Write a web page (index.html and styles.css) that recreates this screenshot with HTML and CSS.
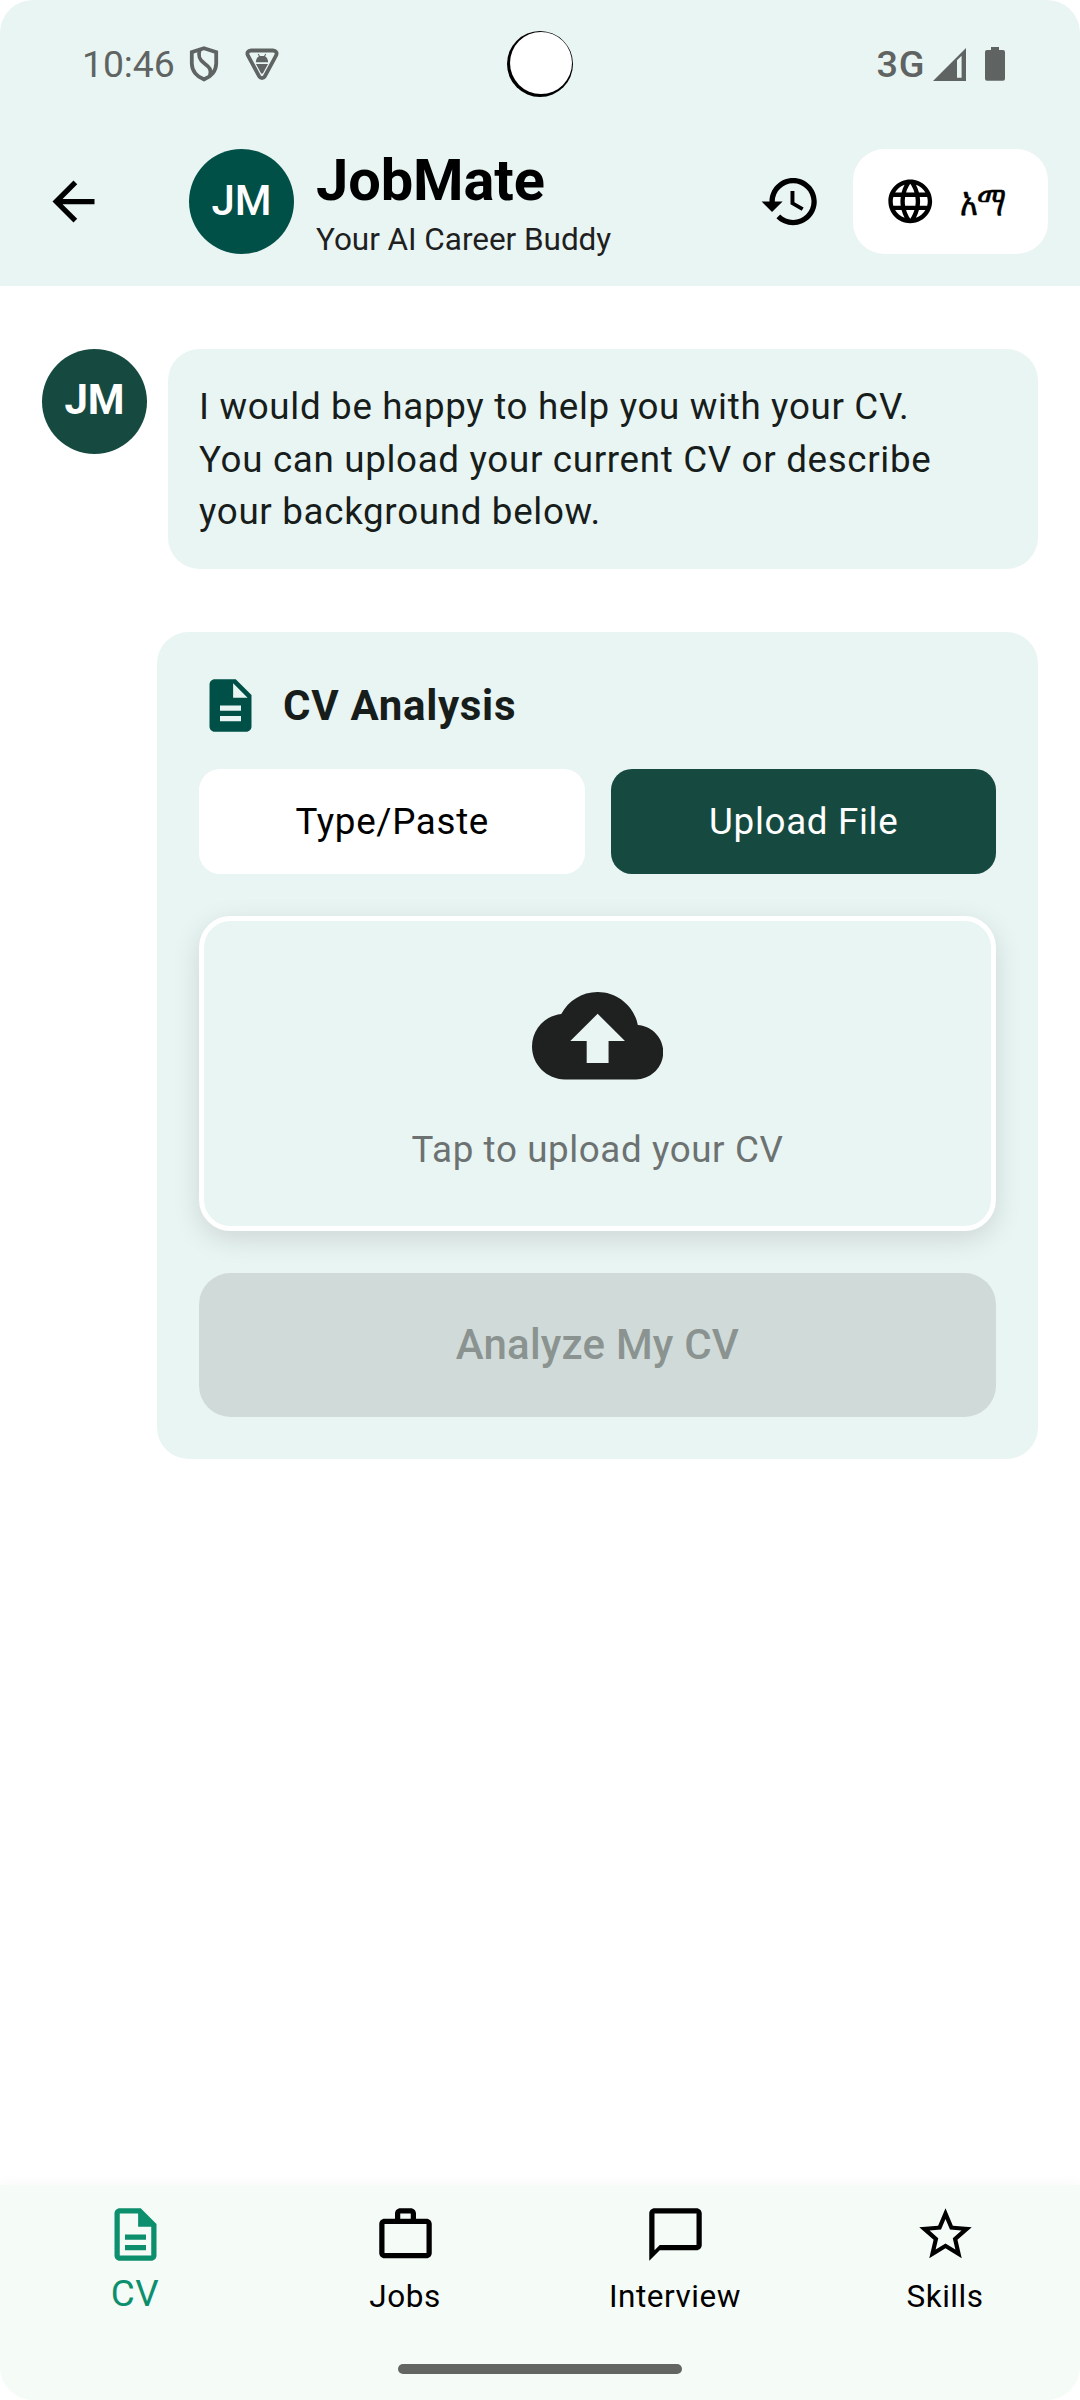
FILE: index.html
```html
<!DOCTYPE html>
<html lang="en">
<head>
<meta charset="utf-8">
<title>JobMate</title>
<link rel="stylesheet" href="styles.css">
</head>
<body>
<div class="screen">
  <header class="header">
    <div class="status">
      <span class="clock">10:46</span>
      <svg class="shield" viewBox="0 0 30 36"><path d="M15 2.200 27.200 6.200V17.500C27.200 25 22 31 15 33.400 8 31 2.800 25 2.800 17.500V6.200Z"/><path d="M10.500 4.500C9 10 10 13.500 15.500 17.500S22.500 24 21 29.500"/></svg>
      <svg class="vpn" viewBox="0 0 34 33"><path class="vpn-frame" d="M6 2.500H28C31 2.500 32.500 5 31 7.600L19.800 28.300C18.500 30.700 15.500 30.700 14.200 28.300L3 7.600C1.500 5 3 2.500 6 2.500Z"/><path class="vpn-fill" d="M10.800 14.200C11 10.800 12.500 9 14 8.300L12.700 6.300 13.600 5.800 15 7.900H19L20.400 5.800 21.300 6.300 20 8.300C21.500 9 23 10.800 23.200 14.200ZM11 16H23L17.800 25.500H16.200Z"/></svg>
      <span class="spacer"></span>
      <span class="network">3G</span>
      <svg class="signal" viewBox="0 0 33 33"><path fill-rule="evenodd" d="M33 0V33H0ZM24 12.300V29.700H28.600V7.700Z"/></svg>
      <svg class="battery" viewBox="0 0 20 34"><path d="M6 0H14V3H18Q20 3 20 5V31.700Q20 33.700 18 33.700H2Q0 33.700 0 31.700V5Q0 3 2 3H6Z"/></svg>
      <span class="camera"><span class="lens"></span></span>
    </div>
    <div class="appbar">
      <svg class="icon" viewBox="0 0 24 24"><path d="M20 11H7.830l5.590-5.590L12 4l-8 8 8 8 1.410-1.410L7.830 13H20v-2z"/></svg>
      <div class="avatar brand"><span>JM</span></div>
      <div class="titles">
        <h1>JobMate</h1>
        <p>Your AI Career Buddy</p>
      </div>
      <svg class="icon" viewBox="0 0 24 24"><path d="M13 3c-4.970 0-9 4.030-9 9H1l3.890 3.890.07.14L9 12H6c0-3.870 3.130-7 7-7s7 3.130 7 7-3.130 7-7 7c-1.930 0-3.680-.79-4.940-2.060l-1.420 1.420C8.270 19.990 10.510 21 13 21c4.970 0 9-4.030 9-9s-4.030-9-9-9zm-1 5v5l4.280 2.540.72-1.210-3.500-2.080V8H12z"/></svg>
      <div class="language">
        <svg class="globe" viewBox="0 0 24 24"><path d="M11.990 2C6.470 2 2 6.480 2 12s4.470 10 9.990 10C17.520 22 22 17.520 22 12S17.520 2 11.990 2zm6.930 6h-2.950c-.32-1.250-.78-2.450-1.380-3.560 1.840.63 3.370 1.910 4.330 3.560zM12 4.040c.83 1.200 1.480 2.530 1.910 3.960h-3.820c.43-1.430 1.080-2.760 1.910-3.960zM4.260 14C4.100 13.360 4 12.690 4 12s.1-1.360.26-2h3.380c-.08.66-.14 1.320-.14 2s.06 1.340.14 2H4.260zm.82 2h2.950c.32 1.250.78 2.450 1.380 3.560-1.840-.63-3.370-1.900-4.330-3.560zm2.950-8H5.080c.96-1.660 2.490-2.930 4.330-3.560C8.810 5.550 8.350 6.750 8.030 8zM12 19.960c-.83-1.200-1.480-2.530-1.910-3.960h3.820c-.43 1.430-1.080 2.760-1.910 3.960zM14.340 14H9.660c-.09-.66-.16-1.320-.16-2s.07-1.350.16-2h4.680c.09.65.16 1.320.16 2s-.07 1.340-.16 2zm.25 5.560c.6-1.110 1.060-2.310 1.380-3.560h2.950c-.96 1.650-2.490 2.930-4.330 3.560zM16.360 14c.08-.66.14-1.320.14-2s-.06-1.340-.14-2h3.380c.16.64.26 1.310.26 2s-.1 1.360-.26 2h-3.380z"/></svg>
        <span class="language-label" lang="am">አማ</span>
      </div>
    </div>
  </header>

  <main class="chat">
    <div class="message">
      <div class="avatar bot"><span>JM</span></div>
      <p class="bubble">I would be happy to help you with your CV.<br>You can upload your current CV or describe<br>your background below.</p>
    </div>

    <section class="card">
      <div class="card-head">
        <svg class="icon doc" viewBox="0 0 24 24"><path d="M14 2H6c-1.100 0-1.990.9-1.990 2L4 20c0 1.100.89 2 1.990 2H18c1.100 0 2-.9 2-2V8l-6-6zm2 16H8v-2h8v2zm0-4H8v-2h8v2zm-3-5V3.500L18.500 9H13z"/></svg>
        <h2>CV Analysis</h2>
      </div>
      <div class="tabs">
        <div class="tab">Type/Paste</div>
        <div class="tab selected">Upload File</div>
      </div>
      <div class="dropzone">
        <svg class="cloud" viewBox="0 0 24 24"><path d="M19.350 10.040C18.670 6.590 15.640 4 12 4 9.110 4 6.600 5.640 5.350 8.040 2.340 8.360 0 10.910 0 14c0 3.310 2.690 6 6 6h13c2.760 0 5-2.240 5-5 0-2.640-2.050-4.780-4.650-4.960zM14 13v4h-4v-4H7l5-5 5 5h-3z"/></svg>
        <span>Tap to upload your CV</span>
      </div>
      <div class="analyze">Analyze My CV</div>
    </section>
  </main>

  <nav class="nav">
    <div class="nav-items">
      <div class="nav-item active">
        <svg class="icon" viewBox="0 0 24 24"><path d="M8 16h8v2H8zm0-4h8v2H8zm6-10H6c-1.100 0-2 .9-2 2v16c0 1.100.89 2 1.990 2H18c1.100 0 2-.9 2-2V8l-6-6zm4 18H6V4h7v5h5v11z"/></svg>
        <span>CV</span>
      </div>
      <div class="nav-item">
        <svg class="icon" viewBox="0 0 24 24"><path fill-rule="evenodd" d="M14 6V4h-4v2h4zM4 8v11h16V8H4zm16-2c1.110 0 2 .89 2 2v11c0 1.110-.89 2-2 2H4c-1.110 0-2-.89-2-2l.01-11c0-1.110.88-2 1.990-2h4V4c0-1.110.89-2 2-2h4c1.110 0 2 .89 2 2v2h4z"/></svg>
        <span>Jobs</span>
      </div>
      <div class="nav-item">
        <svg class="icon" viewBox="0 0 24 24"><path d="M20 2H4c-1.100 0-2 .9-2 2v18l4-4h14c1.100 0 2-.9 2-2V4c0-1.100-.9-2-2-2zm0 14H6l-2 2V4h16v12z"/></svg>
        <span>Interview</span>
      </div>
      <div class="nav-item">
        <svg class="icon" viewBox="0 0 24 24"><path d="M22 9.240l-7.190-.62L12 2 9.190 8.630 2 9.240l5.460 4.730L5.820 21 12 17.270 18.180 21l-1.630-7.030L22 9.240zM12 15.400l-3.760 2.270 1-4.280-3.320-2.880 4.380-.38L12 6.100l1.710 4.040 4.380.38-3.320 2.880 1 4.280L12 15.400z"/></svg>
        <span>Skills</span>
      </div>
    </div>
    <div class="gesture"></div>
  </nav>
</div>
</body>
</html>
```
FILE: styles.css
```css
* { box-sizing: border-box; }

body {
  margin: 0;
  background: #fff;
  font-family: Roboto, "Noto Sans", sans-serif;
  color: #171d1b;
}

h1, h2, p { margin: 0; }
svg { display: block; flex: none; }

.screen {
  width: 1080px;
  height: 2400px;
  display: flex;
  flex-direction: column;
  background: #fff;
  border-radius: 33px;
  overflow: hidden;
}

/* Header */
.header { background: #e9f5f3; }

.status {
  position: relative;
  height: 117px;
  padding: 11px 75px 0 82px;
  display: flex;
  align-items: center;
  color: #5f6463;
}
.clock { font-size: 37.4px; letter-spacing: -0.1px; width: 107px; }
.network { font-size: 37.8px; font-weight: 500; letter-spacing: 0.6px; margin-right: 8px; }
.spacer { flex: 1; }
.shield { width: 30px; height: 36px; margin-right: 26px; fill: none; stroke: #5f6463; stroke-width: 3.8; }
.vpn { width: 34px; height: 33px; }
.vpn-frame { fill: none; stroke: #5f6463; stroke-width: 3.8; }
.vpn-fill { fill: #5f6463; }
.signal { width: 33px; height: 33px; margin-right: 19px; fill: #5f6463; }
.battery { width: 20px; height: 34px; fill: #5f6463; }

.camera {
  position: absolute;
  left: 507px;
  top: 31px;
  width: 66px;
  height: 66px;
  border-radius: 50%;
  background: #000;
}
.lens {
  position: absolute;
  left: 2.5px;
  top: 0.5px;
  width: 62.5px;
  height: 62.5px;
  border-radius: 50%;
  background: #fff;
}

.appbar {
  height: 169px;
  padding: 0 32px 0 42px;
  display: flex;
  align-items: center;
}
.icon { width: 63px; height: 63px; fill: #000; }

.avatar {
  flex: none;
  width: 105px;
  height: 105px;
  border-radius: 50%;
  display: flex;
  align-items: center;
  justify-content: center;
  color: #fff;
  font-size: 42px;
  line-height: 50px;
  padding-bottom: 1px;
}
.brand { background: #005048; font-weight: 500; margin: 0 22px 0 84px; }
.bot { background: #164a41; font-weight: 700; padding-bottom: 3px; }

.titles { flex: 1; }
.titles h1 { color: #000; font-size: 57.75px; line-height: 74px; padding-bottom: 2px; font-weight: 700; letter-spacing: -0.1px; }
.titles p { color: #1f1f1f; font-size: 31.5px; line-height: 42px; letter-spacing: -0.04px; }

.language {
  width: 195px;
  height: 105px;
  margin-left: 31px;
  padding-left: 31px;
  border-radius: 31.5px;
  background: #fff;
  display: flex;
  align-items: center;
  gap: 23px;
}
.globe { width: 52.5px; height: 52.5px; fill: #000; }
.language-label {
  color: #000;
  font-size: 40px;
  line-height: 50px;
  transform: scaleX(0.76);
  transform-origin: left;
  -webkit-text-stroke: 0.5px #000;
}

/* Conversation */
.chat { flex: 1; padding: 63px 42px 0; }
.message { display: flex; align-items: flex-start; gap: 21px; }
.bubble {
  flex: 1;
  height: 220px;
  padding: 32px 31px 0;
  border-radius: 31.5px;
  background: #e9f5f3;
  font-size: 36.75px;
  line-height: 52.5px;
  letter-spacing: 0.67px;
}

.card {
  margin: 63px 0 0 115px;
  padding: 42px;
  border-radius: 31.5px;
  background: #e9f5f3;
}
.card-head { display: flex; align-items: center; gap: 21px; }
.card-head h2 { font-size: 42px; line-height: 63px; font-weight: 700; letter-spacing: 0.7px; }
.doc { fill: #005048; }

.tabs { display: flex; gap: 26px; margin-top: 32px; }
.tab {
  flex: 1;
  height: 105px;
  padding-left: 1px;
  border-radius: 21px;
  background: #fff;
  color: #000;
  font-size: 36.75px;
  line-height: 105px;
  letter-spacing: 0.68px;
  text-align: center;
}
.tab.selected { background: #164a41; color: #fff; }

.dropzone {
  height: 315px;
  margin-top: 42px;
  padding-top: 49px;
  border: 5px solid #fff;
  border-radius: 31.5px;
  background: #e9f5f3;
  box-shadow: 0 8px 28px rgba(0, 0, 0, 0.12);
  display: flex;
  flex-direction: column;
  align-items: center;
  gap: 23px;
  color: #6c7271;
  font-size: 36.75px;
  line-height: 52px;
  letter-spacing: 0.6px;
}
.cloud { width: 131.25px; height: 131.25px; fill: #1f2120; }

.analyze {
  height: 144px;
  margin-top: 42px;
  border-radius: 31.5px;
  background: #d0dbd9;
  color: #8b9391;
  font-size: 42px;
  font-weight: 500;
  line-height: 144px;
  letter-spacing: 0.2px;
  text-align: center;
}

/* Bottom navigation */
.nav {
  height: 215px;
  padding-top: 18px;
  background: #f5fbf7;
  box-shadow: 0 0 14px rgba(0, 0, 0, 0.04);
  display: flex;
  flex-direction: column;
  align-items: center;
}
.nav-items { width: 100%; display: grid; grid-template-columns: repeat(4, 1fr); }
.nav-item {
  display: flex;
  flex-direction: column;
  align-items: center;
  color: #000;
  font-size: 31.5px;
  line-height: 62px;
  letter-spacing: 0.54px;
}
.nav-item.active { color: #0c8f6c; font-size: 36.75px; line-height: 56px; }
.nav-item.active .icon { fill: #0c8f6c; }
.gesture { width: 284px; height: 10px; margin-top: 36px; border-radius: 5px; background: #636563; }
```
